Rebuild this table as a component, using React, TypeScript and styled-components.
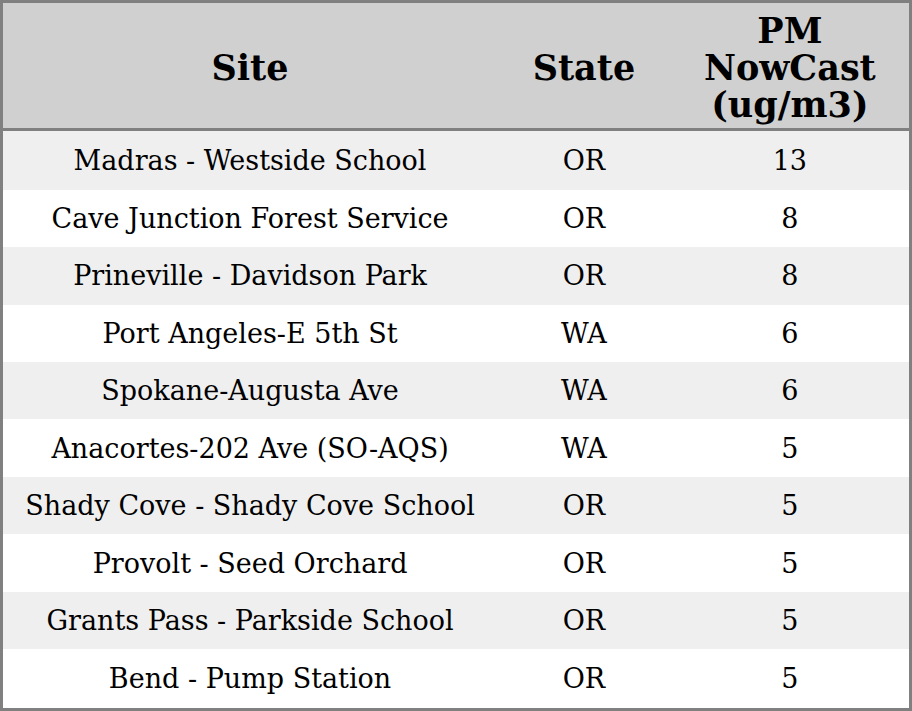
import React from "react";
import styled, { createGlobalStyle } from "styled-components";

const Global = createGlobalStyle`
  html, body { margin: 0; padding: 0; background: #ffffff; }
  #root { width: 912px; height: 711px; }
`;

const Table = styled.table`
  width: 912px;
  height: 711px;
  border-collapse: collapse;
  border: 3px solid #808080;
  font-family: "DejaVu Serif", serif;
  color: #000;
  table-layout: fixed;
`;

const Col = styled.col<{ $w: number }>`
  width: ${(p) => p.$w}px;
`;

const HeadRow = styled.tr`
  background: #d0d0d0;
  border-bottom: 3px solid #808080;
  height: 128px;
`;

const Th = styled.th`
  font-size: 35px;
  font-weight: bold;
  text-align: center;
  vertical-align: middle;
  padding: 3px 0 0;
  line-height: 37px;
`;

const Row = styled.tr<{ $alt: boolean }>`
  background: ${(p) => (p.$alt ? "#efefef" : "#ffffff")};
`;

const Td = styled.td`
  font-size: 27px;
  text-align: center;
  vertical-align: middle;
  padding: 0;
  white-space: nowrap;
`;

const rows: [string, string, string][] = [
  ["Madras - Westside School", "OR", "13"],
  ["Cave Junction Forest Service", "OR", "8"],
  ["Prineville - Davidson Park", "OR", "8"],
  ["Port Angeles-E 5th St", "WA", "6"],
  ["Spokane-Augusta Ave", "WA", "6"],
  ["Anacortes-202 Ave (SO-AQS)", "WA", "5"],
  ["Shady Cove - Shady Cove School", "OR", "5"],
  ["Provolt - Seed Orchard", "OR", "5"],
  ["Grants Pass - Parkside School", "OR", "5"],
  ["Bend - Pump Station", "OR", "5"],
];

export default function App() {
  return (
    <>
      <Global />
      <Table>
        <colgroup>
          <Col $w={494} />
          <Col $w={173} />
          <Col $w={239} />
        </colgroup>
        <thead>
          <HeadRow>
            <Th>Site</Th>
            <Th>State</Th>
            <Th>
              PM
              <br />
              NowCast
              <br />
              (ug/m3)
            </Th>
          </HeadRow>
        </thead>
        <tbody>
          {rows.map((r, i) => (
            <Row key={i} $alt={i % 2 === 0}>
              <Td>{r[0]}</Td>
              <Td>{r[1]}</Td>
              <Td>{r[2]}</Td>
            </Row>
          ))}
        </tbody>
      </Table>
    </>
  );
}
